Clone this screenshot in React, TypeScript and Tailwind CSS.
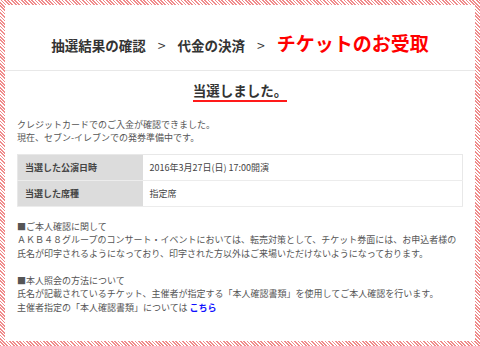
const FONT = "font-['Noto_Sans_CJK_JP','Noto_Sans',sans-serif]"

const ROWS = [
  { label: '当選した公演日時', value: '2016年3月27日(日) 17:00開演' },
  { label: '当選した席種', value: '指定席' },
]

function Breadcrumb() {
  return (
    <div className="flex items-baseline justify-center pt-[24px] pb-[12px] border-b border-[#e8e8e8]">
      <span className="text-[13.5px] font-bold text-[#333]">抽選結果の確認</span>
      <span className="mx-[12px] text-[14px] text-[#333]">&gt;</span>
      <span className="text-[13.5px] font-bold text-[#333]">代金の決済</span>
      <span className="mx-[12px] text-[14px] text-[#333]">&gt;</span>
      <span className="text-[19px] font-bold text-[#ff0000]">チケットのお受取</span>
    </div>
  )
}

export default function App() {
  return (
    <div className={`w-[480px] h-[346px] p-[5px] bg-[repeating-linear-gradient(45deg,#f08c8c_0px,#f08c8c_1.2px,#fff_1.2px,#fff_2.4px)] ${FONT}`}>
      <div className="h-full bg-white">
        <Breadcrumb />

        <div className="flex justify-center pt-[10px]">
          <h2 className="text-[13.5px] font-bold text-[#333] leading-[18px] pb-[1px] border-b-2 border-[#ff1a1a]">当選しました。</h2>
        </div>

        <div className="px-[12px] pt-[16px] text-[9px] text-[#555] leading-[13px]">
          <p>クレジットカードでのご入金が確認できました。</p>
          <p>現在、セブン-イレブンでの発券準備中です。</p>

          <table className="w-full mt-[10px] border border-[#e8e8e8] border-collapse">
            <tbody>
              {ROWS.map((r) => (
                <tr key={r.label} className="h-[26px] border-b border-[#ececec]">
                  <th className="w-[125px] bg-[#dcdcdc] text-left font-bold text-[#444] pl-[7px]">{r.label}</th>
                  <td className="pl-[7px] text-[#444]">{r.value}</td>
                </tr>
              ))}
            </tbody>
          </table>

          <div className="mt-[13px] leading-[13.5px]">
            <p>■ご本人確認に関して</p>
            <p>ＡＫＢ４８グループのコンサート・イベントにおいては、転売対策として、チケット券面には、お申込者様の</p>
            <p>氏名が印字されるようになっており、印字された方以外はご来場いただけないようになっております。</p>
            <br />
            <p>■本人照会の方法について</p>
            <p>氏名が記載されているチケット、主催者が指定する「本人確認書類」を使用してご本人確認を行います。</p>
            <p>
              主催者指定の「本人確認書類」については <a href="#" className="font-bold text-[#1010ff]">こちら</a>
            </p>
          </div>
        </div>
      </div>
    </div>
  )
}
